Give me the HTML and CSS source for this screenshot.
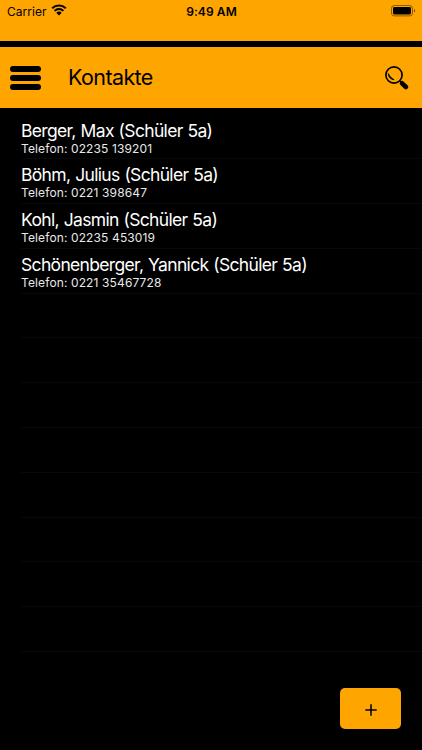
FILE: index.html
```html
<!DOCTYPE html>
<html lang="de">
<head>
    <meta charset="UTF-8">
    <meta name="viewport" content="width=device-width, initial-scale=1.0">
    <title>Kontakte</title>
    <link rel="stylesheet" href="styles.css">
</head>
<body>
    <div class="status-bar">
        <div class="carrier">
            <span>Carrier</span>
            <svg class="wifi" viewBox="0 0 16 12" width="16" height="12">
                <path d="M1.2 4.3a9.7 9.7 0 0 1 13.6 0M3.6 6.9a6.2 6.2 0 0 1 8.8 0" fill="none" stroke="#000" stroke-width="2"/>
                <path d="M8 11.4L5.3 8.8a3.9 3.9 0 0 1 5.4 0z"/>
            </svg>
        </div>
        <div class="time">9:49 AM</div>
        <svg class="battery" viewBox="0 0 25 12" width="25" height="12">
            <rect x=".5" y=".5" width="21" height="10.4" rx="2.8" fill="none" stroke="#000" stroke-opacity=".45"/>
            <rect x="2" y="2" width="18" height="7.4" rx="1.4"/>
            <path d="M23 4v3.6c1.6-.5 1.6-3.1 0-3.6z" opacity=".5"/>
        </svg>
    </div>
    <div class="header">
        <button class="menu-btn" aria-label="Menü">
            <span></span>
            <span></span>
            <span></span>
        </button>
        <h1 class="title">Kontakte</h1>
        <button class="search-btn" aria-label="Suchen">
            <svg viewBox="0 0 24 24" width="24" height="24">
                <circle cx="9" cy="9" r="8.1" fill="none" stroke="#000" stroke-width="1.7"/>
                <path d="M3.3 7.6c.3 3.7 2.3 5.9 5.8 6.1-2.4-1.1-4.4-3-5.8-6.1z" stroke="#000" stroke-width=".9"/>
                <path d="M14.6 14.8l2.4 2.2" fill="none" stroke="#000" stroke-width="1.4"/>
                <path d="M17.1 17.3l3.8 3.7" fill="none" stroke="#000" stroke-width="4.6" stroke-linecap="round"/>
            </svg>
        </button>
    </div>
    <ul class="list">
        <li class="row">
            <div class="name">Berger, Max (Schüler 5a)</div>
            <div class="phone">Telefon: 02235 139201</div>
        </li>
        <li class="row">
            <div class="name">Böhm, Julius (Schüler 5a)</div>
            <div class="phone">Telefon: 0221 398647</div>
        </li>
        <li class="row">
            <div class="name">Kohl, Jasmin (Schüler 5a)</div>
            <div class="phone">Telefon: 02235 453019</div>
        </li>
        <li class="row">
            <div class="name">Schönenberger, Yannick (Schüler 5a)</div>
            <div class="phone">Telefon: 0221 35467728</div>
        </li>
        <li class="row"></li>
        <li class="row"></li>
        <li class="row"></li>
        <li class="row"></li>
        <li class="row"></li>
        <li class="row"></li>
        <li class="row"></li>
        <li class="row"></li>
    </ul>
    <div class="footer">
        <button class="add-btn" aria-label="Kontakt hinzufügen">
            <svg viewBox="0 0 12 12" width="12" height="12">
                <path d="M6 .3v11.4M.3 6h11.4" stroke="#000" stroke-width="1.5"/>
            </svg>
        </button>
    </div>
</body>
</html>
```
FILE: styles.css
```css
* {
    box-sizing: border-box;
}
body {
    margin: 0;
    height: 100vh;
    overflow: hidden;
    background-color: #000;
    color: #fff;
    font-family: Inter, "Liberation Sans", sans-serif;
    display: flex;
    flex-direction: column;
}
button {
    padding: 0;
    border: none;
    background: none;
    cursor: pointer;
}
svg {
    display: block;
}
.status-bar {
    height: 41px;
    flex: none;
    padding: 4px 6px 0 7px;
    background: orange;
    color: #000;
    display: grid;
    grid-template-columns: 1fr auto 1fr;
    align-items: start;
    font-size: 12px;
    line-height: 15px;
}
.carrier {
    display: flex;
    gap: 4px;
    letter-spacing: 0.05px;
}
.time {
    font-weight: 600;
    letter-spacing: 0.1px;
}
.battery {
    justify-self: end;
    margin-top: 1px;
}
.header {
    height: 61px;
    flex: none;
    margin-top: 6px;
    padding: 0 13px 0 10px;
    background: orange;
    color: #000;
    display: flex;
    align-items: center;
}
.menu-btn {
    width: 31px;
    display: flex;
    flex-direction: column;
    gap: 3px;
}
.menu-btn span {
    height: 6px;
    border-radius: 3px;
    background: #000;
}
.title {
    flex: 1;
    margin: -2px 0 0 27px;
    font-size: 21.5px;
    font-weight: 400;
    line-height: 26px;
    letter-spacing: -0.6px;
}
.list {
    flex: none;
    margin: 6.5px 0 0;
    padding: 0 0 0 21px;
    list-style: none;
}
.row {
    height: 44.8px;
    padding-top: 4px;
    border-bottom: 1px solid #080808;
}
.name {
    font-size: 17.5px;
    line-height: 23px;
    letter-spacing: -0.67px;
    word-spacing: 0.6px;
    white-space: nowrap;
}
.phone {
    font-size: 12px;
    line-height: 13px;
    letter-spacing: 0.12px;
    color: #e8e8e8;
}
.footer {
    margin-top: auto;
    padding: 0 21px 21px;
    display: flex;
    justify-content: flex-end;
}
.add-btn {
    width: 61px;
    height: 41px;
    padding-top: 3px;
    border-radius: 5px;
    background: orange;
    display: flex;
    align-items: center;
    justify-content: center;
}
```
